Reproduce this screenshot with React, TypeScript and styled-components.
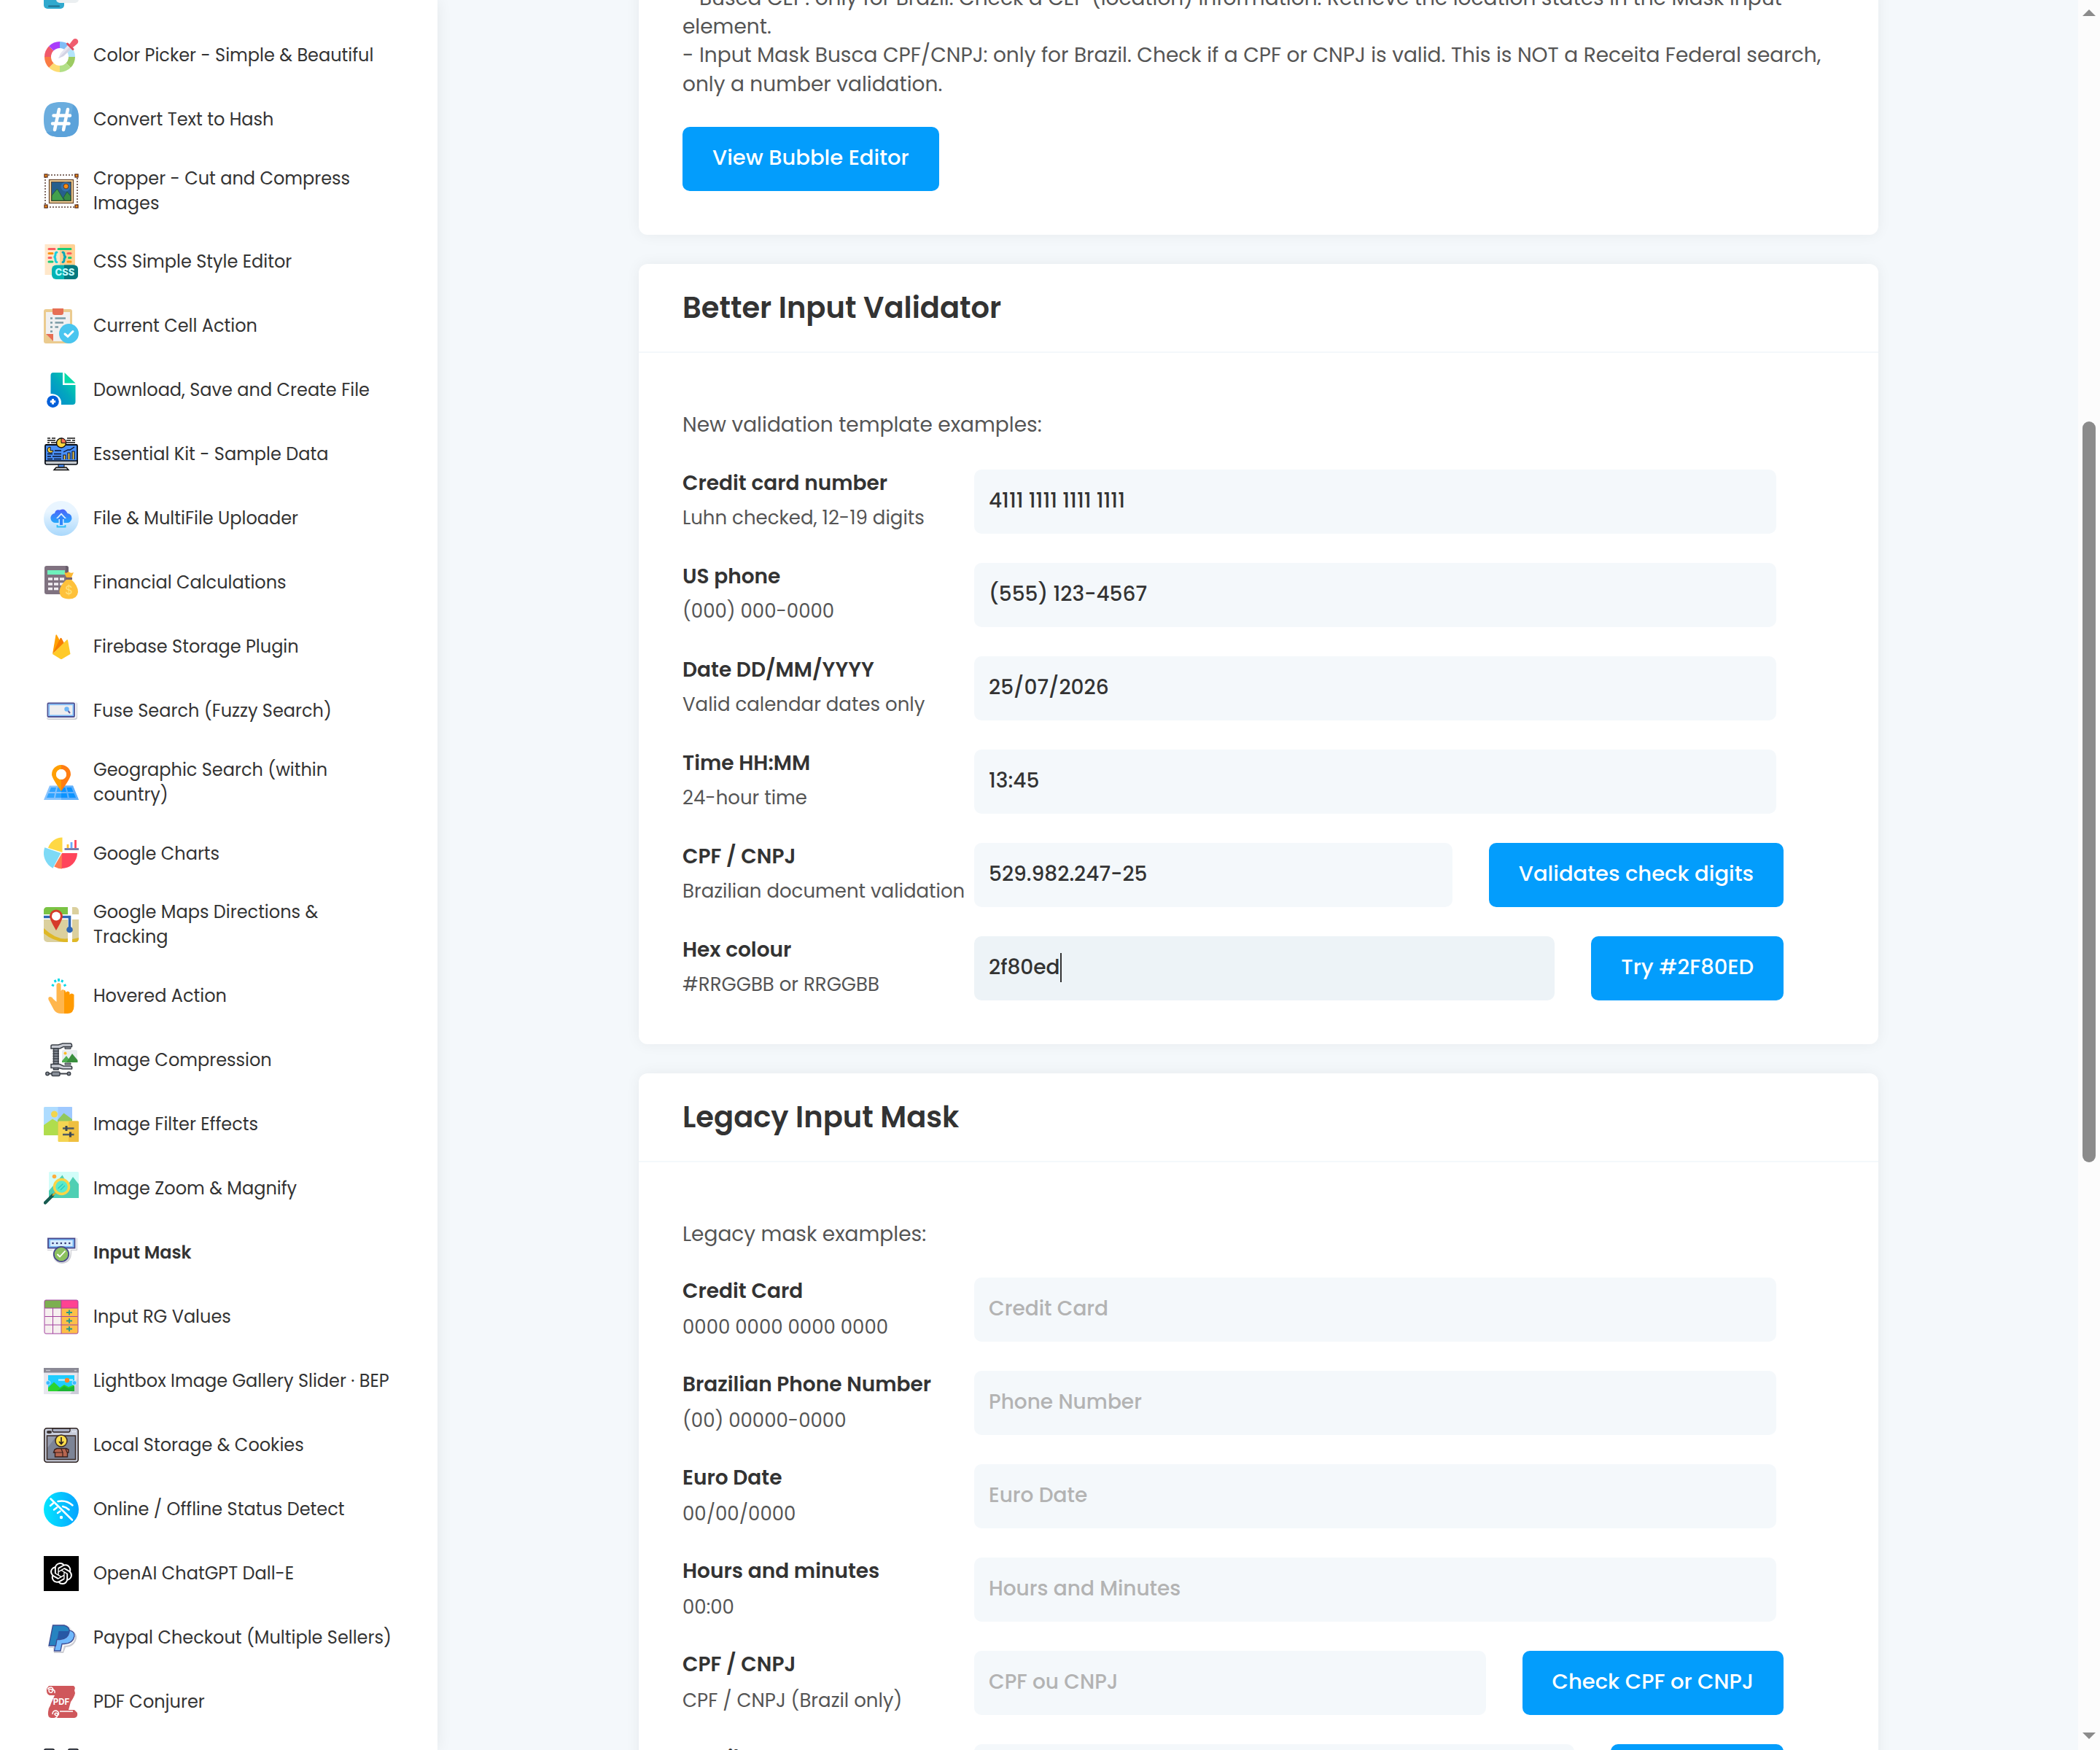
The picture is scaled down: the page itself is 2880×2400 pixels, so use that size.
import React from "react";
import styled, { createGlobalStyle } from "styled-components";
import { SiOpenai } from "react-icons/si";

const GlobalStyle = createGlobalStyle`
  * { box-sizing: border-box; }
  html, body { margin: 0; padding: 0; background: #f4f8fb; }
  body, input, button { font-family: Poppins, Inter, "Noto Sans", sans-serif; }
`;

const Page = styled.div`
  display: flex;
  height: 100vh;
  overflow: hidden;
`;

const Sidebar = styled.nav`
  flex: 0 0 600px;
  background: #fff;
  box-shadow: 0 0 20px rgba(0, 0, 0, 0.07);
`;

const PluginList = styled.ul`
  list-style: none;
  margin: -36px 0 0;
  padding: 0 60px;
  display: flex;
  flex-direction: column;
  gap: 40px;
`;

const PluginLink = styled.a<{ $active?: boolean }>`
  display: flex;
  align-items: center;
  gap: 20px;
  min-height: 48px;
  font-size: 24px;
  line-height: 1.4;
  font-weight: ${(p) => (p.$active ? 600 : 400)};
  color: #333;
  text-decoration: none;
  white-space: nowrap;
`;

const IconFrame = styled.svg`
  flex: none;
  width: 48px;
  height: 48px;
  display: block;
`;

const Main = styled.main`
  flex: 1;
  display: flex;
  flex-direction: column;
  align-items: center;
  gap: 40px;
  margin-top: -22px;
  padding-right: 28px;
`;

const Card = styled.section`
  flex: none;
  width: 100%;
  max-width: 1700px;
  background: #fff;
  border-radius: 12px;
  box-shadow: 0 0 20px rgba(0, 0, 0, 0.06);
`;

const CardHeader = styled.header`
  display: flex;
  align-items: center;
  height: 122px;
  padding: 0 60px;
  border-bottom: 2px solid #f4f8fb;
`;

const Title = styled.h2`
  margin: 0;
  font-size: 40px;
  line-height: 60px;
  font-weight: 600;
  color: #333;
`;

const CardBody = styled.div<{ $top?: number }>`
  padding: ${(p) => p.$top ?? 79}px 60px 60px;
`;

const Copy = styled.p<{ $gap: number }>`
  margin: 0 0 ${(p) => p.$gap}px;
  font-size: 28px;
  line-height: 1.4;
  color: #555;
  white-space: nowrap;
`;

const Rows = styled.div`
  display: flex;
  flex-direction: column;
  gap: 40px;
  margin-right: 70px;
`;

const Row = styled.div`
  display: grid;
  grid-template-columns: 400px 1fr;
`;

const LabelCell = styled.div<{ $gap: number }>`
  display: flex;
  flex-direction: column;
  gap: ${(p) => p.$gap}px;
  white-space: nowrap;
  height: 88px;
`;

const Label = styled.label`
  font-size: 28px;
  line-height: 38px;
  font-weight: 600;
  color: #333;
`;

const Hint = styled.span`
  font-size: 26px;
  line-height: 40px;
  color: #555;
`;

const FieldCell = styled.div<{ $wide: boolean }>`
  display: flex;
  gap: 50px;
  padding-right: ${(p) => (p.$wide ? 10 : 0)}px;
`;

const FieldBox = styled.div<{ $focused?: boolean }>`
  flex: 1;
  min-width: 0;
  display: flex;
  align-items: center;
  height: 88px;
  padding: 0 20px 2px;
  border-radius: 10px;
  background: ${(p) => (p.$focused ? "#edf3f7" : "#f4f8fb")};
`;

const TextInput = styled.input<{ $fit?: boolean }>`
  ${(p) => (p.$fit ? "field-sizing: content;" : "width: 100%;")}
  border: 0;
  padding: 0;
  outline: 0;
  background: transparent;
  font-size: 28px;
  line-height: 40px;
  font-weight: 500;
  color: #333;
  &::placeholder { color: #b3b3b3; opacity: 1; }
`;

const Caret = styled.span`
  width: 2px;
  height: 40px;
  background: #333;
`;

const Button = styled.button`
  flex: none;
  height: 88px;
  padding: 0 41px 4px;
  border: 0;
  border-radius: 10px;
  background: #039dfc;
  color: #fff;
  font-size: 29px;
  line-height: 40px;
  font-weight: 500;
  white-space: nowrap;
`;

const ScrollRail = styled.div`
  position: fixed;
  top: 0;
  right: 0;
  bottom: 0;
  width: 30px;
  padding: 13px 6px 15px;
  display: flex;
  flex-direction: column;
  background: #fcfcfc;
`;

const ScrollSpace = styled.div<{ $grow: number }>`
  flex: ${(p) => p.$grow} 0 0;
`;

const ScrollThumb = styled.div`
  flex: 1016 0 0;
  border-radius: 9px;
  background: #8b8b8b;
`;

/* One wedge of a ring, angles in degrees clockwise from the top. */
function wedge(cx: number, cy: number, r1: number, r2: number, from: number, to: number) {
  const at = (r: number, a: number) => {
    const t = (a * Math.PI) / 180;
    return `${(cx + r * Math.sin(t)).toFixed(2)} ${(cy - r * Math.cos(t)).toFixed(2)}`;
  };
  const large = to - from > 180 ? 1 : 0;
  return `M${at(r2, from)}A${r2} ${r2} 0 ${large} 1 ${at(r2, to)}L${at(r1, to)}A${r1} ${r1} 0 ${large} 0 ${at(r1, from)}Z`;
}

const ringColors = ["#80bcf6", "#b3e4fb", "#9ccb62", "#b2df86", "#fddc72", "#fa7b43", "#f0596b", "#a93dfb"];

const icons: Record<string, React.ReactNode> = {
  chat: (
    <>
      <rect x="0" y="8" width="28" height="40" rx="5" fill="#30a9ce" />
      <rect x="17" y="4" width="31" height="36" rx="5" fill="#ebeff1" />
      <path d="M7 44.5H21" stroke="#1f6f8c" strokeWidth="2" strokeLinecap="round" />
    </>
  ),
  color: (
    <>
      {ringColors.map((c, i) => (
        <path key={c} d={wedge(22, 26, 12, 21, i * 45, i * 45 + 45)} fill={c} />
      ))}
      <path d="M20 28L23 21L33 10L38 15L27 25Z" fill="#e6e6f1" />
      <path d="M20 28L27 25L38 15L35.500 12.500Z" fill="#d3d3e4" />
      <path d="M32.500 8L40 15.500" stroke="#e04a5f" strokeWidth="3" strokeLinecap="round" />
      <path d="M35 9L40 2.500Q43 0 46 2Q48.500 5 46 8L39.500 13.500Z" fill="#f05d6f" />
    </>
  ),
  hash: (
    <>
      <path d="M24 0C42 0 48 6 48 24S42 48 24 48S0 42 0 24S6 0 24 0Z" fill="#6badde" />
      <path d="M40 3.500C46 7 48 13 48 24C48 42 42 48 24 48C13 48 7 46 3.500 41C26 40 38 30 40 3.500Z" fill="#5ba2da" />
      <path d="M21 10L15 38M33 10L27 38M13.500 18.500H36M12 29.500H34.500" stroke="#fff" strokeWidth="4.500" strokeLinecap="round" fill="none" />
    </>
  ),
  crop: (
    <>
      <rect x="2" y="2" width="44" height="44" fill="none" stroke="#5c4037" strokeWidth="1.500" strokeDasharray="2 2" />
      {[[1, 1], [43, 1], [1, 43], [43, 43]].map(([x, y]) => (
        <rect key={`${x}-${y}`} x={x} y={y} width="4" height="4" fill="#f28c13" stroke="#5c3021" strokeWidth="1.300" />
      ))}
      <rect x="7.500" y="8.500" width="33" height="32" fill="#f5d49b" stroke="#6d4a30" strokeWidth="1.300" />
      <rect x="10.500" y="11.500" width="27" height="26" fill="#265f8d" stroke="#5b4330" strokeWidth="1" />
      <circle cx="30" cy="18" r="6.500" fill="#3a7bb6" opacity=".7" />
      <circle cx="30.500" cy="17.500" r="3.400" fill="#f58d14" stroke="#68371b" strokeWidth="1" />
      <path d="M11 37V30L18.500 21L28 37H11Z" fill="#43a04d" stroke="#20532d" strokeWidth=".8" />
      <path d="M27 33L32 25L37 31V37H29Z" fill="#368c43" stroke="#20532d" strokeWidth=".8" />
    </>
  ),
  css: (
    <>
      <path d="M1.500 0H22V42H1.500Z" fill="#ffe7ca" />
      <path d="M22 0H41Q43 0 43 2V42H22Z" fill="#ffd193" />
      <g strokeWidth="3" strokeLinecap="round" fill="none">
        <path d="M7 6.500H15M7 18.500H10" stroke="#fb5f5f" />
        <path d="M20 6.500H37M34.500 18.500H37M7 24H12" stroke="#17cb79" />
        <path d="M7 12.500H12M33 24H37" stroke="#fb9212" />
        <path d="M33 12.500H37" stroke="#fb5f5f" />
        <path d="M18 11Q16 11 16 14Q16 17.500 13.500 17.500Q16 17.500 16 21Q16 24.500 18 24.500" stroke="#19cfe0" />
        <path d="M26 11Q28 11 28 14Q28 17.500 31 17.500Q28 17.500 28 21Q28 24.500 26 24.500" stroke="#08a9b6" />
      </g>
      <rect x="11" y="28.500" width="36" height="19.500" rx="6" fill="#02b3b3" />
      <path d="M28 28.500H41Q47 28.500 47 34.500V42Q47 48 41 48H28Z" fill="#04797f" />
      <text x="29" y="43" textAnchor="middle" fontFamily="Inter, sans-serif" fontWeight="800" fontSize="13" fill="#c3fbff">CSS</text>
    </>
  ),
  clipboard: (
    <>
      <rect x="0" y="1" width="39" height="47" rx="3" fill="#ebcb8f" />
      <path d="M3 5H36V45H13L3 35Z" fill="#f0f0f1" />
      <path d="M3 35H13V45Z" fill="#e66e54" />
      <path d="M12 0H27V6Q27 9 24 9H15Q12 9 12 6Z" fill="#e66e54" />
      <path d="M9 13.500H12M9 19.500H12M9 25.500H12M9 31.500H12M15.500 13.500H30M15.500 19.500H27M15.500 25.500H20" stroke="#7b9aa5" strokeWidth="2.600" />
      <circle cx="34.500" cy="34.500" r="13.500" fill="#49c5ef" />
      <path d="M29 35L33 38.500L40 31.500" stroke="#fff" strokeWidth="3" strokeLinecap="round" fill="none" />
    </>
  ),
  download: (
    <>
      <defs>
        <linearGradient id="file-fill" x1="1" y1="0" x2="0" y2="1">
          <stop offset="0" stopColor="#04e3a6" />
          <stop offset=".5" stopColor="#02a8bd" />
          <stop offset="1" stopColor="#0586d4" />
        </linearGradient>
      </defs>
      <path d="M13 0H26V17H43.500V40Q43.500 44 39.500 44H24Q25 36 19 31.500Q15 28.500 9.500 29V4Q9.500 0 13 0Z" fill="url(#file-fill)" />
      <path d="M28.500 0L43.500 14.500H28.500Z" fill="#06dba9" />
      <circle cx="12.500" cy="39.700" r="8.300" fill="#045fd9" />
      <path d="M12.500 36V43.400M8.800 39.700H16.200" stroke="#fff" strokeWidth="3" />
    </>
  ),
  data: (
    <>
      <path d="M5 2H9M11 2H16M5 5H16M5 8H8M10 8H18M32 2H43M31 5H37M39 5H43M30 8H43" stroke="#111" strokeWidth="1.400" />
      <rect x="2" y="11" width="44" height="26" rx="1.500" fill="#4a8ff6" stroke="#050a12" strokeWidth="1.800" />
      <path d="M2 33H46V36Q46 38 44 38H4Q2 38 2 36Z" fill="#c5c9cf" stroke="#050a12" strokeWidth="1.500" />
      <circle cx="24" cy="8.500" r="6.500" fill="#fdd63f" stroke="#111" strokeWidth="1.400" />
      <path d="M24 2V8.500H30.500Q30.500 2.500 24 2Z" fill="#ff7150" stroke="#111" />
      <path d="M9 14A4 4 0 1 0 13 19H9Z" fill="#fdd63f" stroke="#111" />
      <path d="M15 19H24M5 23.500H12M14 23.500H24M5 27H10M12 27H24M5 30.500H12M14 30.500H24" stroke="#0a1430" strokeWidth="1.400" />
      <path d="M27 31V25H30V31M33 31V22H36V31M39 31V20H42V31" fill="#f8d355" stroke="#0a1430" strokeWidth="1.200" />
      <path d="M27 21L33 18L36 18L42 14" stroke="#0a1430" strokeWidth="1.300" fill="none" />
      <path d="M20 38H28V42H20Z" fill="#4a8ff6" stroke="#111" />
      <path d="M17 42H31L34 45.500H14Z" fill="#c5c9cf" stroke="#111" strokeWidth="1.400" />
    </>
  ),
  upload: (
    <>
      <defs>
        <linearGradient id="upload-sky" x1="0" y1="0" x2="0" y2="1">
          <stop offset=".3" stopColor="#e9f5ff" />
          <stop offset="1" stopColor="#a9d8fc" />
        </linearGradient>
        <linearGradient id="upload-cloud" x1="0" y1="0" x2="0" y2="1">
          <stop offset="0" stopColor="#4c61fa" />
          <stop offset="1" stopColor="#25a9fb" />
        </linearGradient>
      </defs>
      <circle cx="24" cy="24" r="24" fill="url(#upload-sky)" />
      <path d="M17 30A6.500 6.500 0 0 1 15 17Q16 11 22 12.500Q29 9 32.500 17A6.500 6.500 0 0 1 31.500 30H27.500V24H31L24 16.500L17 24H20.500V30Z" fill="url(#upload-cloud)" />
      <path d="M24 19L29.500 25H26V33H22V25H18.500Z" fill="#2f86fb" />
      <path d="M18.500 33V35.500H29.500V33" stroke="#2fbdf6" strokeWidth="1.800" fill="none" />
    </>
  ),
  finance: (
    <>
      <rect x="1" y="1" width="33" height="39" rx="3" fill="#7f7280" />
      <path d="M30 1Q34 1 34 4V20H30Z" fill="#695d6b" />
      <rect x="5" y="7" width="24" height="6" fill="#6ff0bc" />
      <path d="M6 19H12M14 19H20M22 19H28M6 26H12M14 26H20M22 26H27M6 32.500H12M14 32.500H20" stroke="#f1eef2" strokeWidth="3.400" />
      <path d="M28 10Q31 12 34 9Q37 12 41 10L38 17H31Z" fill="#fbb733" />
      <path d="M30 18.500H39" stroke="#76626d" strokeWidth="3.200" />
      <path d="M31 20H38Q47 28 47 37Q46 46.500 34.500 46.500Q22 46.500 21.500 36Q22 28 31 20Z" fill="#fec13b" />
      <text x="34.500" y="40" textAnchor="middle" fontFamily="Inter, sans-serif" fontSize="16" fill="#ffe27c">$</text>
    </>
  ),
  firebase: (
    <>
      <path d="M12 34L16.500 8Q17 6.500 18 8L23 17Z" fill="#ffa000" />
      <path d="M12 34L22.500 12.500Q23.500 11 24.500 12.500L28 19Z" fill="#f57c00" />
      <path d="M12 34L31.500 14.500Q33 14 33 15L36.500 34L25.500 40.500Q24 41.500 22.500 40.500Z" fill="#ffca28" />
    </>
  ),
  fuse: (
    <>
      <rect x="4" y="12" width="42" height="24" rx="3" fill="#c8c9cf" />
      <rect x="3.500" y="11" width="41.500" height="23.500" rx="3" fill="#f6f6f8" />
      <rect x="5.500" y="13.500" width="36.500" height="18.500" rx="1" fill="#eeeeef" stroke="#4b4d90" strokeWidth="1.800" />
      <rect x="7.300" y="15.300" width="33" height="15" fill="none" stroke="#7cbdfb" strokeWidth="1.600" />
      <circle cx="31.500" cy="21.500" r="3.200" fill="#6db6f7" />
      <path d="M33.500 24L36 27" stroke="#5b5ea0" strokeWidth="2" />
    </>
  ),
  geo: (
    <>
      <path d="M8 28.500H40L48 48H0Z" fill="#87c3fd" />
      <path d="M24 28.500H40L48 48H24Z" fill="#61b0fb" />
      <path d="M10 31H17L15.500 37H7.500ZM19 31H24V37H17.500ZM6.500 39H15L14 45H4ZM17 39H24V45H16Z" fill="#2fa3ff" />
      <path d="M24 31H29.500L31 37H24ZM31.500 31H38L40.500 37H33ZM24 39H31.500L32.500 45H24ZM33.500 39H41.500L44 45H35Z" fill="#0b93ff" />
      <path d="M24 0A13 13 0 0 0 11 13Q11 18 24 36V20A7 7 0 1 1 24 6Z" fill="#ff9f02" />
      <path d="M24 0A13 13 0 0 1 37 13Q37 18 24 36V20A7 7 0 1 0 24 6Z" fill="#ff7d13" />
      <circle cx="24" cy="13" r="7" fill="#fff" />
    </>
  ),
  charts: (
    <>
      <path d={wedge(25.500, 23, 0, 20.500, 288, 360)} fill="#fed843" />
      <path d={wedge(23.500, 24, 0, 23.500, 208, 289)} fill="#7edaf6" />
      <path d={wedge(25, 24, 0, 21.500, 180, 210)} fill="#fd7a4f" />
      <path d={wedge(25, 24, 0, 21, 90, 181)} fill="#ff455b" />
      <path d="M28.500 18.500H48" stroke="#646fa3" strokeWidth="2.600" />
      <path d="M33 17V12" stroke="#fec031" strokeWidth="2.800" />
      <path d="M38 17V9" stroke="#6aaafc" strokeWidth="2.800" />
      <path d="M43.500 17V6" stroke="#ff455b" strokeWidth="2.800" />
    </>
  ),
  maps: (
    <>
      <rect width="48" height="48" rx="5" fill="#dbd09e" />
      <path d="M0 10V5Q0 0 5 0H33V10Z" fill="#7ac344" />
      <path d="M0 29Q18 46 34 43V48H28Q12 46 0 36ZM39 44L48 42V43Q48 48 43 48H39Z" fill="#dfb826" />
      <path d="M33 0H39V48H33ZM0 10H48V17H0Z" fill="#fff" />
      <path d="M0 13.500H35.500V30" stroke="#2d66b4" strokeWidth="3.600" fill="none" />
      <circle cx="35.500" cy="31" r="4.300" fill="#2d66b4" />
      <path d="M17 32Q8 17 8 12.500A9 9 0 0 1 26 12.500Q26 17 17 32Z" fill="#d63b2a" />
      <circle cx="17" cy="12.500" r="6" fill="#fff" />
    </>
  ),
  hover: (
    <>
      <path d="M20.500 0V4M15 2L16.500 5M26 2L24.500 5M11 8.500L14 10M30.500 8.500L27.500 10" stroke="#08d9e6" strokeWidth="3" />
      <path d="M17.500 32V8.500Q18 6 20.500 6T23.500 8.500V17Q26 13 29 17.500L34 48H24Q17 48 14 43L6.500 29Q5.500 25 9 25Q11.500 25 13 28Z" fill="#ffb64d" />
      <path d="M28 48V16Q30 16 30 19Q33 16 35.500 19V22Q38 19 41.500 22V38Q41.500 48 32 48Z" fill="#ff9a01" />
    </>
  ),
  compress: (
    <>
      <path d="M10 4.500Q10 3 12 3H20L26 1H37Q39 2 38.500 5.500H27L22 8H10Z" fill="#c9ccd4" stroke="#3c4149" strokeWidth="1.500" />
      <path d="M29 6H37V8.500H29ZM29 28H37V30H29Z" fill="#9599a2" stroke="#3c4149" />
      <rect x="13.500" y="8" width="6.500" height="29" fill="#8a909a" stroke="#3c4149" strokeWidth="1.500" />
      <path d="M12.500 11.500H21M12.500 15H21M12.500 18.500H21M12.500 22H21M12.500 25.500H21M12.500 29H21" stroke="#3c4149" strokeWidth="1.300" />
      <path d="M10 29.500H22L27 32H37Q39.500 33 38.500 36H26L20 34.500H10Z" fill="#c9ccd4" stroke="#3c4149" strokeWidth="1.500" />
      <rect x="25" y="10" width="21" height="17" rx="2" fill="#e8edf0" />
      <circle cx="29.500" cy="14.500" r="2" fill="#fdbb2b" />
      <path d="M25 25L31 18L38 27H25Z" fill="#4fae51" />
      <path d="M31 27L39 15L46.500 24V27Z" fill="#388e3d" />
      <path d="M5 42.500H35" stroke="#3c4149" strokeWidth="2" />
      <rect x="11" y="40" width="11" height="5.500" rx="1.500" fill="#8a909a" stroke="#3c4149" strokeWidth="1.500" />
      <circle cx="5" cy="42.500" r="2.200" fill="#8a909a" stroke="#3c4149" strokeWidth="1.500" />
      <circle cx="34.500" cy="42.500" r="2.200" fill="#8a909a" stroke="#3c4149" strokeWidth="1.500" />
    </>
  ),
  filter: (
    <>
      <rect width="39" height="39" rx="1.500" fill="#aedcff" />
      <path d="M19.500 0H38Q39 0 39 1V39H19.500Z" fill="#9fc9ff" />
      <circle cx="14.500" cy="10" r="4.500" fill="#f2d54f" />
      <path d="M19 18L27.500 8.500L39 17V39H19Z" fill="#92c85c" />
      <path d="M0 25L12 16.500L19.500 21V39H1Q0 39 0 38Z" fill="#b0dd4d" />
      <rect x="19.500" y="19.500" width="28.500" height="28.500" rx="1.500" fill="#f4d552" />
      <path d="M34 19.500H47Q48 19.500 48 21V47Q48 48 47 48H34Z" fill="#efbf40" />
      <path d="M26 29.500H41.500M26 38H41.500" stroke="#505b63" strokeWidth="2.600" />
      <path d="M31 26V33M36.500 34.500V41.500" stroke="#3d474f" strokeWidth="3" />
    </>
  ),
  zoom: (
    <>
      <rect x="7" y="1" width="41" height="36" rx="1.500" fill="#d2fdf9" />
      <path d="M7 27L25.500 5.500L33 19L40 8L48 18V37H7Z" fill="#4fcfb3" />
      <circle cx="14.500" cy="7.500" r="2.800" fill="#fdae3f" />
      <path d="M2 43.500L12 33.500" stroke="#175b50" strokeWidth="4.500" strokeLinecap="round" />
      <path d="M12 33.500L17 29" stroke="#e0ad26" strokeWidth="2" />
      <circle cx="24.500" cy="21.500" r="10" fill="#5aeacb" stroke="#fbd546" strokeWidth="3.400" />
      <path d="M19.500 24L26.500 17.500M23 26L29 20" stroke="#26cabe" strokeWidth="1.300" />
    </>
  ),
  mask: (
    <>
      <path d="M5 4H46V21H38Q39 38 25 39Q11 38 12.500 21H5Z" fill="#cdced4" />
      <path d="M4 3H45V20H37Q37 37 24 37.500Q11.500 37 11.500 20H4Z" fill="#f7f7f9" />
      <rect x="6" y="4.500" width="36.500" height="13" fill="#7ebcf9" stroke="#47488b" strokeWidth="1.800" />
      <rect x="9" y="7" width="30.500" height="8" fill="#d6ebfc" />
      <path d="M12.500 11H37" stroke="#333473" strokeWidth="2.600" strokeLinecap="round" strokeDasharray="0 5.700" />
      <circle cx="24" cy="26" r="10.200" fill="#8cc15f" stroke="#47488b" strokeWidth="1.800" />
      <path d="M18.500 26L22 29.500L29.500 21.500" stroke="#fff" strokeWidth="1.800" fill="none" />
    </>
  ),
  rg: (
    <>
      <rect x="1" y="1" width="46" height="46" rx="2" fill="#f6f0ef" />
      <path d="M1 12V3Q1 1 3 1H24V12Z" fill="#7caf4f" />
      <path d="M24 12V1H45Q47 1 47 3V12Z" fill="#ff4292" />
      <path d="M24 12H47V45Q47 47 45 47H24Z" fill="#fdbf48" />
      <path d="M1.500 12H46.500M1.500 23.500H46.500M1.500 35H46.500M24 1V47M12.500 12V47" stroke="#a2429f" strokeWidth="1" />
      <rect x="1" y="1" width="46" height="46" rx="2" fill="none" stroke="#a2429f" strokeWidth="1" />
      <path d="M35 14.500V21.500M31 18H39M35 26V33M31 29.500H39M35 37V44M31 40.500H39" stroke="#24998c" strokeWidth="1.800" />
    </>
  ),
  lightbox: (
    <>
      <rect y="6" width="48" height="36" fill="#e7e7ee" />
      <path d="M36 42Q46 32 46 12H48V42Z" fill="#ccccd8" />
      <rect y="6" width="48" height="6.500" fill="#8a8995" />
      <path d="M3 9.500H9M42 9.500H45" stroke="#c4c4cc" strokeWidth="1.600" />
      <rect x="6" y="16" width="36" height="22" fill="#1fcdff" />
      <path d="M20 22.500H40" stroke="#b9ecff" strokeWidth="2.400" />
      <circle cx="32" cy="23" r="3.200" fill="#fb8427" />
      <path d="M6 33L14 25.500L22 33L28 29L34 32L42 29V38H6Z" fill="#2bd42f" />
      <path d="M18 38L28 31L34 34L42 31V38Z" fill="#1bb536" />
      <circle cx="6" cy="26.500" r="3" fill="#3bb8ff" stroke="#bdeaff" />
      <circle cx="42" cy="26.500" r="3" fill="#3bb8ff" stroke="#bdeaff" />
    </>
  ),
  storage: (
    <>
      <rect x=".8" y=".8" width="46.400" height="46.400" rx="3.500" fill="#c9cedc" stroke="#2c211f" strokeWidth="1.600" />
      <path d="M12 1H36V3.500Q36 6 34 6H14Q12 6 12 3.500Z" fill="#aab0c3" stroke="#2c211f" strokeWidth="1.300" />
      <rect x="4" y="4" width="7" height="4" rx="2" fill="#3c3435" />
      <path d="M39 5.500H44" stroke="#edf0f7" strokeWidth="1.600" strokeDasharray="2 1" />
      <rect x="4.500" y="11" width="39" height="32.500" fill="#7d8496" stroke="#3a2a25" strokeWidth="1.500" />
      <path d="M5.500 12H17L5.500 27Z" fill="#969cad" />
      <circle cx="24" cy="18" r="8" fill="#fbdd4b" stroke="#3a2a25" strokeWidth="1.500" />
      <path d="M24 13V22M21 19L24 22.500L27 19" stroke="#2c211f" strokeWidth="1.700" fill="none" />
      <path d="M15 30L18 28.500H31L34 30V34H32.500V40H15.500V34H13.500Z" fill="#b76650" stroke="#3a211d" strokeWidth="1.400" />
      <path d="M14 34H26L24 29M26 34V40M30 29L32 34" stroke="#3a211d" strokeWidth="1.200" fill="none" />
    </>
  ),
  offline: (
    <>
      <defs>
        <linearGradient id="signal-fill" x1="0" y1="0" x2="1" y2="0">
          <stop offset="0" stopColor="#03e6ff" />
          <stop offset="1" stopColor="#08a3ff" />
        </linearGradient>
      </defs>
      <circle cx="24" cy="24" r="24" fill="url(#signal-fill)" />
      <g stroke="#fff" strokeWidth="2.500" strokeLinecap="round" fill="none">
        <path d="M9.500 9.500L39 38.500M19.500 13Q31 10.500 39.500 18.500M9 19L13 15.500M26 20Q31 21 34.500 24.500M14 24.500L18 21.500M19 29L22.500 26.500" />
      </g>
      <circle cx="24" cy="35" r="2.200" fill="#fff" />
    </>
  ),
  openai: (
    <>
      <rect width="48" height="48" fill="#000" />
      <SiOpenai x="9" y="9" size={30} color="#fff" />
    </>
  ),
  paypal: (
    <>
      <path d="M13 6H31Q37 9 38 14Q46 18 45 25Q42 37 30 37L27 45H14L13 38H7Z" fill="#cccdd3" />
      <path d="M12 5H30Q36 8 37 13Q44 17 43 24Q41 35 28 35L26 43H14V37H6Z" fill="#f7f7f9" />
      <path d="M19 14H36Q43 16 42 22Q40 32 28 32.500H25L23 42H14.500Z" fill="#6fb8fc" stroke="#3c4b92" strokeWidth="1.300" />
      <path d="M12.500 7H28Q36 9 35 16Q33 26 22 26.500H18L16.500 35H7Z" fill="#2683c0" stroke="#3c4b92" strokeWidth="1.300" />
      <path d="M20.500 15H34.500Q34 25 22 26L18.500 26Z" fill="#2758a5" />
    </>
  ),
  pdf: (
    <>
      <path d="M7 2H41Q44 4 42 8L43 12Q42 17 37 24L34 35H42L46 39Q47 45 42 46H10Q5 45 6 38Q6 33 9 29L10 26L15 15H8Q3 13 4 6Z" fill="#cf575b" />
      <path d="M5.500 7Q6.500 3.500 10.500 4Q15 6 11 11Q7 12 7 8Q9 5 11 8M11 7Q16 7 15 12" stroke="#fff" strokeWidth="1.500" fill="none" />
      <path d="M12 41Q12 36 17 36Q22 38 20 42Q17 44 15 41Q16 38 19 40Q20 45 14 47M22 37H40" stroke="#fff" strokeWidth="1.500" fill="none" />
      <text x="24" y="28" textAnchor="middle" fontFamily="Inter, sans-serif" fontWeight="700" fontSize="11.500" fill="#fff">PDF</text>
    </>
  ),
  next: (
    <>
      <rect x=".8" y=".8" width="13.500" height="12" rx="2" fill="#8a93a8" stroke="#17191f" strokeWidth="1.600" />
      <rect x="33.700" y=".8" width="13.500" height="12" rx="2" fill="#8a93a8" stroke="#17191f" strokeWidth="1.600" />
    </>
  ),
};

const plugins: { icon: string; lines?: string[]; active?: boolean }[] = [
  { icon: "chat" },
  { icon: "color", lines: ["Color Picker - Simple & Beautiful"] },
  { icon: "hash", lines: ["Convert Text to Hash"] },
  { icon: "crop", lines: ["Cropper - Cut and Compress", "Images"] },
  { icon: "css", lines: ["CSS Simple Style Editor"] },
  { icon: "clipboard", lines: ["Current Cell Action"] },
  { icon: "download", lines: ["Download, Save and Create File"] },
  { icon: "data", lines: ["Essential Kit - Sample Data"] },
  { icon: "upload", lines: ["File & MultiFile Uploader"] },
  { icon: "finance", lines: ["Financial Calculations"] },
  { icon: "firebase", lines: ["Firebase Storage Plugin"] },
  { icon: "fuse", lines: ["Fuse Search (Fuzzy Search)"] },
  { icon: "geo", lines: ["Geographic Search (within", "country)"] },
  { icon: "charts", lines: ["Google Charts"] },
  { icon: "maps", lines: ["Google Maps Directions &", "Tracking"] },
  { icon: "hover", lines: ["Hovered Action"] },
  { icon: "compress", lines: ["Image Compression"] },
  { icon: "filter", lines: ["Image Filter Effects"] },
  { icon: "zoom", lines: ["Image Zoom & Magnify"] },
  { icon: "mask", lines: ["Input Mask"], active: true },
  { icon: "rg", lines: ["Input RG Values"] },
  { icon: "lightbox", lines: ["Lightbox Image Gallery Slider · BEP"] },
  { icon: "storage", lines: ["Local Storage & Cookies"] },
  { icon: "offline", lines: ["Online / Offline Status Detect"] },
  { icon: "openai", lines: ["OpenAI ChatGPT Dall-E"] },
  { icon: "paypal", lines: ["Paypal Checkout (Multiple Sellers)"] },
  { icon: "pdf", lines: ["PDF Conjurer"] },
  { icon: "next" },
];

type FieldSpec = {
  id: string;
  label: string;
  hint?: string;
  value?: string;
  placeholder?: string;
  action?: string;
  focused?: boolean;
};

const validatorFields: FieldSpec[] = [
  { id: "card", label: "Credit card number", hint: "Luhn checked, 12-19 digits", value: "4111 1111 1111 1111" },
  { id: "phone", label: "US phone", hint: "(000) 000-0000", value: "(555) 123-4567" },
  { id: "date", label: "Date DD/MM/YYYY", hint: "Valid calendar dates only", value: "25/07/2026" },
  { id: "time", label: "Time HH:MM", hint: "24-hour time", value: "13:45" },
  { id: "cpf", label: "CPF / CNPJ", hint: "Brazilian document validation", value: "529.982.247-25", action: "Validates check digits" },
  { id: "hex", label: "Hex colour", hint: "#RRGGBB or RRGGBB", value: "2f80ed", action: "Try #2F80ED", focused: true },
];

const legacyFields: FieldSpec[] = [
  { id: "legacy-card", label: "Credit Card", hint: "0000 0000 0000 0000", placeholder: "Credit Card" },
  { id: "legacy-phone", label: "Brazilian Phone Number", hint: "(00) 00000-0000", placeholder: "Phone Number" },
  { id: "legacy-date", label: "Euro Date", hint: "00/00/0000", placeholder: "Euro Date" },
  { id: "legacy-time", label: "Hours and minutes", hint: "00:00", placeholder: "Hours and Minutes" },
  { id: "legacy-cpf", label: "CPF / CNPJ", hint: "CPF / CNPJ (Brazil only)", placeholder: "CPF ou CNPJ", action: "Check CPF or CNPJ" },
  { id: "legacy-cep", label: "Brazil", action: "Check CEP" },
];

function Field({ field, hintGap }: { field: FieldSpec; hintGap: number }) {
  return (
    <Row>
      <LabelCell $gap={hintGap}>
        <Label htmlFor={field.id}>{field.label}</Label>
        {field.hint && <Hint>{field.hint}</Hint>}
      </LabelCell>
      <FieldCell $wide={!field.action}>
        <FieldBox $focused={field.focused}>
          <TextInput id={field.id} type="text" defaultValue={field.value} placeholder={field.placeholder} $fit={field.focused} />
          {field.focused && <Caret />}
        </FieldBox>
        {field.action && <Button type="button">{field.action}</Button>}
      </FieldCell>
    </Row>
  );
}

export default function App() {
  return (
    <>
      <GlobalStyle />
      <Page>
        <Sidebar>
          <PluginList>
            {plugins.map((p) => (
              <li key={p.icon}>
                <PluginLink href="#" $active={p.active}>
                  <IconFrame viewBox="0 0 48 48" aria-hidden="true">{icons[p.icon]}</IconFrame>
                  {p.lines && (
                    <span>
                      {p.lines.map((line, i) => (
                        <React.Fragment key={line}>
                          {i > 0 && <br />}
                          {line}
                        </React.Fragment>
                      ))}
                    </span>
                  )}
                </PluginLink>
              </li>
            ))}
          </PluginList>
        </Sidebar>
        <Main>
          <Card>
            <CardBody $top={0}>
              <Copy $gap={39}>
                - Busca CEP: only for Brazil. Check a CEP (location) information. Retrieve the location states in the Mask Input
                <br />
                element.
                <br />
                - Input Mask Busca CPF/CNPJ: only for Brazil. Check if a CPF or CNPJ is valid. This is NOT a Receita Federal search,
                <br />
                only a number validation.
              </Copy>
              <Button type="button">View Bubble Editor</Button>
            </CardBody>
          </Card>
          <Card>
            <CardHeader><Title>Better Input Validator</Title></CardHeader>
            <CardBody>
              <Copy $gap={42}>New validation template examples:</Copy>
              <Rows>{validatorFields.map((f) => <Field key={f.id} field={f} hintGap={8} />)}</Rows>
            </CardBody>
          </Card>
          <Card>
            <CardHeader><Title>Legacy Input Mask</Title></CardHeader>
            <CardBody>
              <Copy $gap={40}>Legacy mask examples:</Copy>
              <Rows>{legacyFields.map((f) => <Field key={f.id} field={f} hintGap={10} />)}</Rows>
            </CardBody>
          </Card>
        </Main>
        <ScrollRail aria-hidden="true">
          <svg width="18" height="9" viewBox="0 0 18 9"><path d="M9 0L18 9H0Z" fill="#8b8b8b" /></svg>
          <ScrollSpace $grow={556} />
          <ScrollThumb />
          <ScrollSpace $grow={782} />
          <svg width="18" height="9" viewBox="0 0 18 9"><path d="M0 0H18L9 9Z" fill="#8b8b8b" /></svg>
        </ScrollRail>
      </Page>
    </>
  );
}
